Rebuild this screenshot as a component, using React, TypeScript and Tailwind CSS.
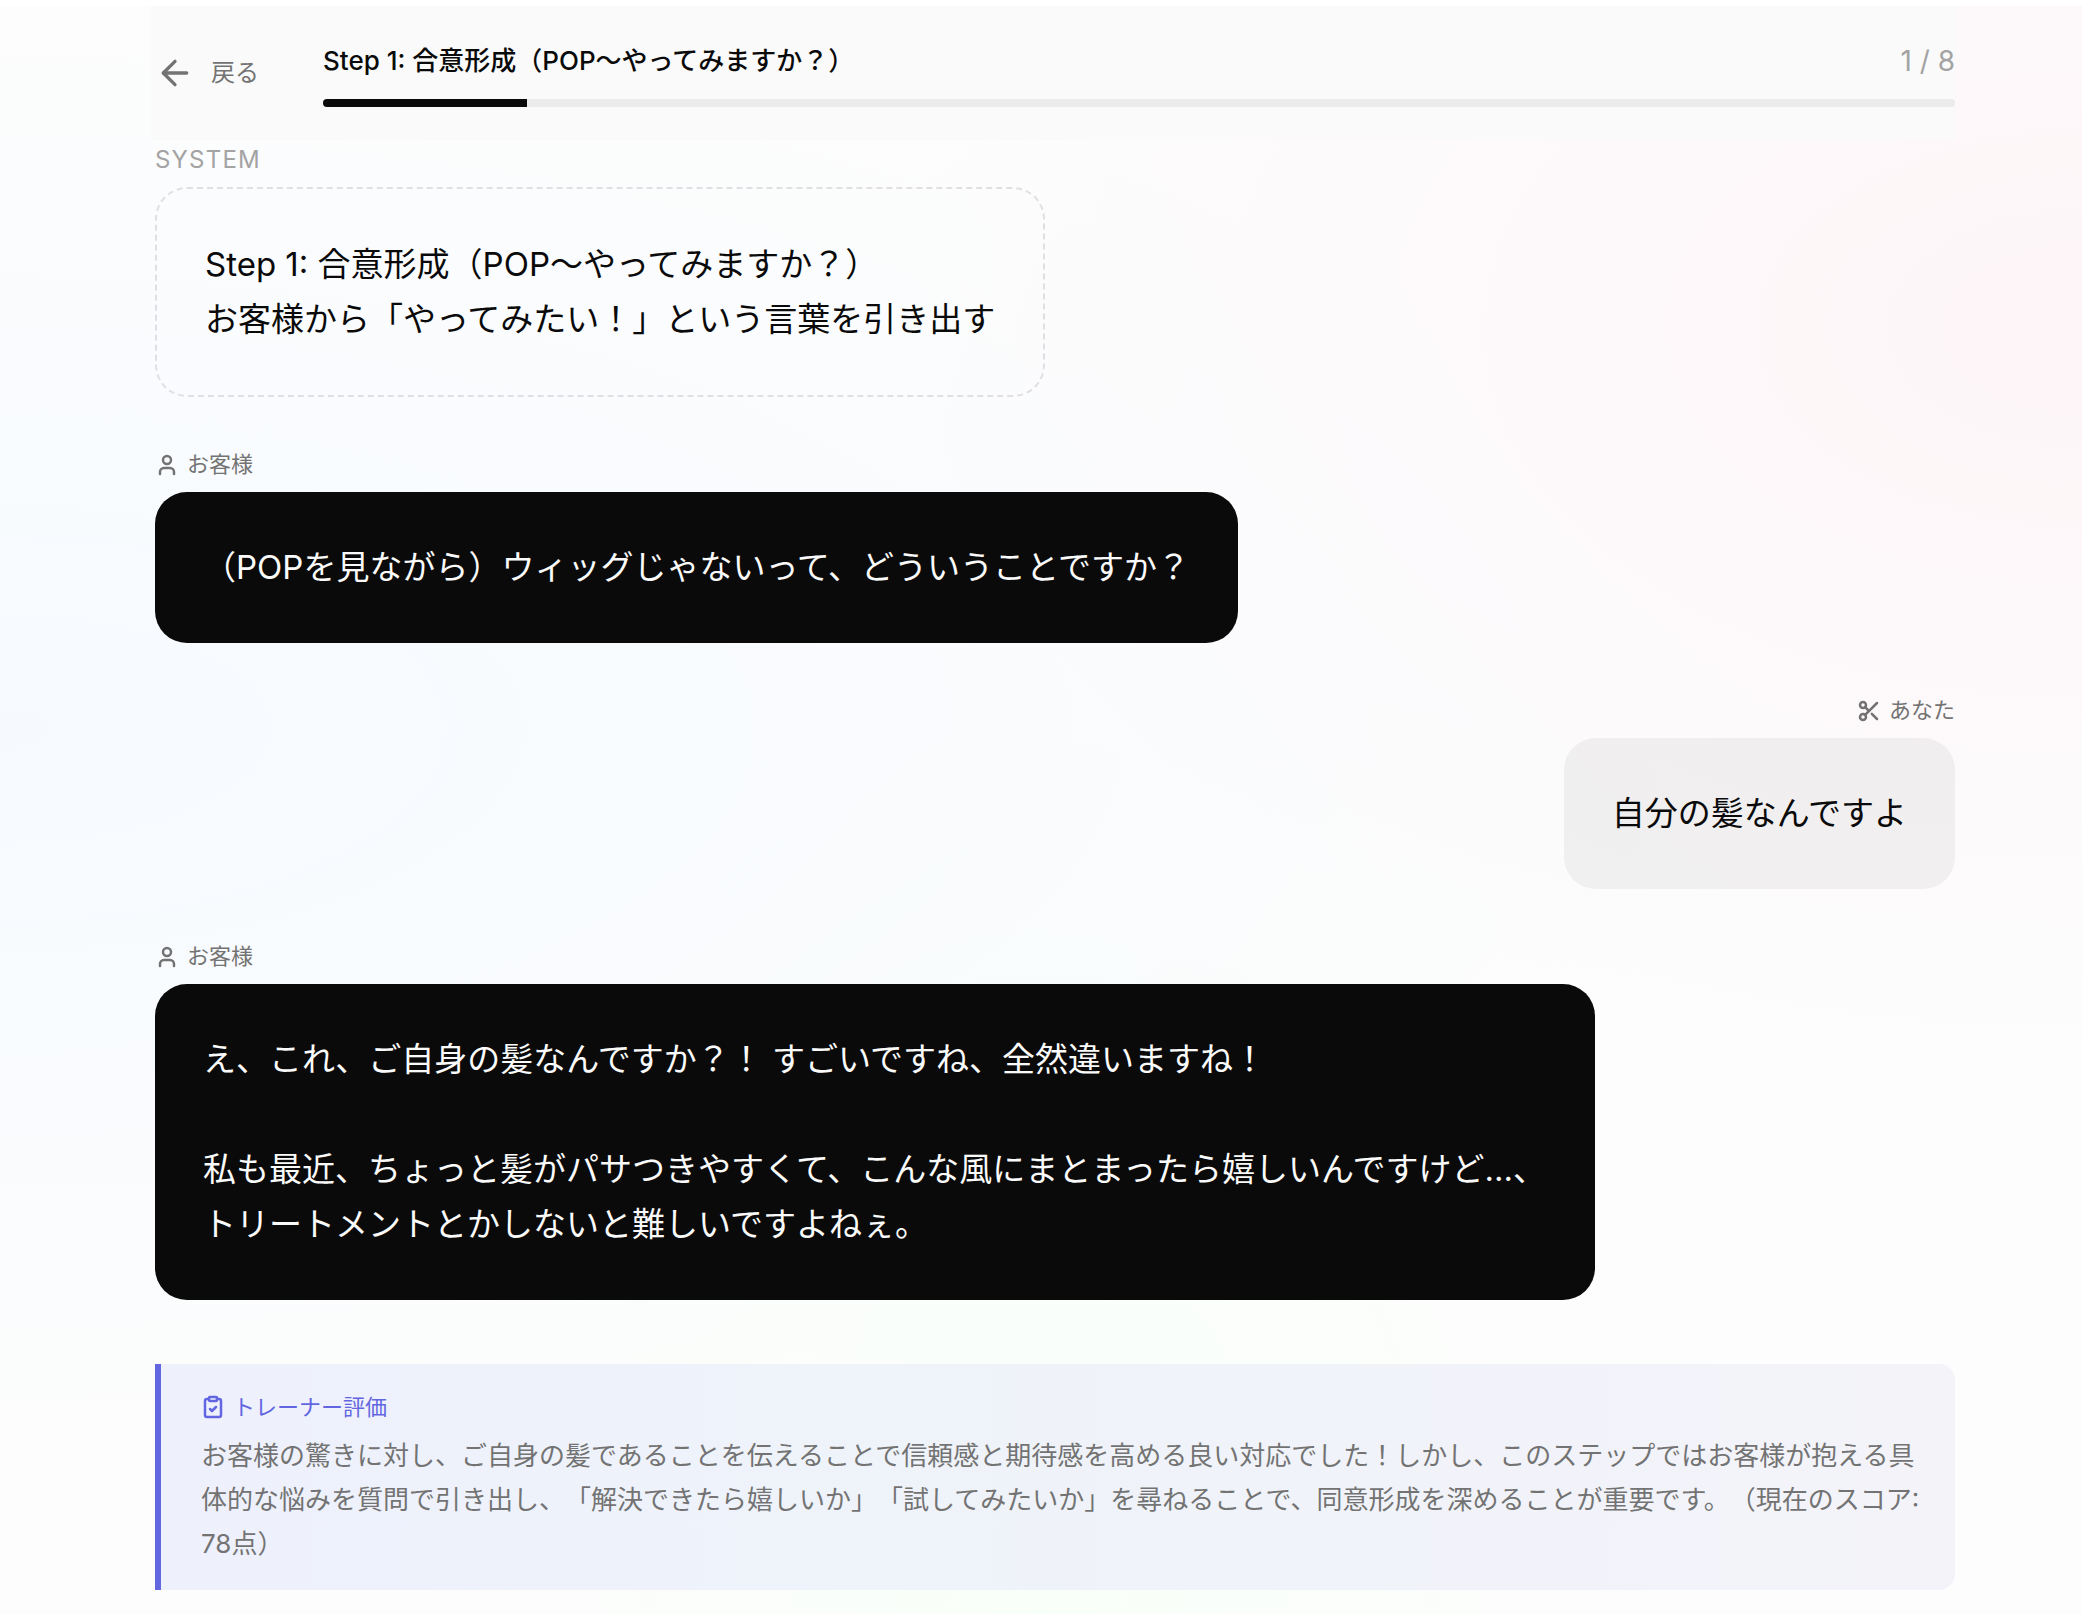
import { ArrowLeft, ClipboardCheck, Scissors, User } from 'lucide-react';
import React from 'react';

type Role = 'system' | 'customer' | 'user';

interface Message {
    role: Role;
    text: string;
}

const STEP_TITLE = 'Step 1: 合意形成（POP〜やってみますか？）';
const CURRENT_STEP = 1;
const TOTAL_STEPS = 8;

const MESSAGES: Message[] = [
    { role: 'system', text: `${STEP_TITLE}\nお客様から「やってみたい！」という言葉を引き出す` },
    { role: 'customer', text: '（POPを見ながら）ウィッグじゃないって、どういうことですか？' },
    { role: 'user', text: '自分の髪なんですよ' },
    {
        role: 'customer',
        text: 'え、これ、ご自身の髪なんですか？！ すごいですね、全然違いますね！\n\n私も最近、ちょっと髪がパサつきやすくて、こんな風にまとまったら嬉しいんですけど...、トリートメントとかしないと難しいですよねぇ。',
    },
];

const BUBBLE_STYLES: Record<Role, string> = {
    system: 'border-2 border-dashed border-[#e0e0e4] text-[#0a0a0a]',
    customer: 'bg-[#0a0a0a] text-[#fafafa]',
    user: 'bg-[#0a0a0a]/5 text-[#0a0a0a]',
};

function RoleLabel({ role }: { role: Role }) {
    if (role === 'system') {
        return <span className="text-[24px] leading-[39px] tracking-wider text-[#a3a3a3]">SYSTEM</span>;
    }
    const Icon = role === 'customer' ? User : Scissors;
    return (
        <span className="flex items-center gap-2 text-[22px] leading-[39px] text-[#737373]">
            <Icon className="size-6" strokeWidth={2.5} />
            {role === 'customer' ? 'お客様' : 'あなた'}
        </span>
    );
}

function ChatMessage({ role, text }: Message) {
    return (
        <div className={`flex flex-col gap-2 ${role === 'user' ? 'items-end' : 'items-start'}`}>
            <RoleLabel role={role} />
            <p className={`max-w-4/5 whitespace-pre-wrap rounded-[32px] p-12 text-[33px] leading-[55px] ${BUBBLE_STYLES[role]}`}>
                {text}
            </p>
        </div>
    );
}

function StepHeader() {
    return (
        <header className="-ml-1 flex h-[134px] items-center gap-16 bg-[#fafafa] pl-1">
            <button type="button" className="flex shrink-0 cursor-pointer items-center gap-4 text-[24px] text-[#737373]">
                <ArrowLeft className="size-10" />
                戻る
            </button>
            <div className="flex flex-1 flex-col gap-4">
                <div className="flex items-center justify-between leading-[44px]">
                    <h1 className="text-[26px] font-medium text-[#0a0a0a]">{STEP_TITLE}</h1>
                    <span className="text-[28px] text-[#a3a3a3]">
                        {CURRENT_STEP} / {TOTAL_STEPS}
                    </span>
                </div>
                <div className="h-2 overflow-hidden rounded-sm bg-[#ebebeb]">
                    <div className="h-full bg-[#0a0a0a]" style={{ width: `${(CURRENT_STEP / TOTAL_STEPS) * 100}%` }} />
                </div>
            </div>
        </header>
    );
}

function TrainerFeedback() {
    return (
        <section className="mt-16 rounded-r-2xl border-l-6 border-[#6366e1] bg-linear-to-r from-[#eef1fc] via-[#eff3f9] to-[#f4f3fa] py-6 pl-10 pr-6">
            <h2 className="mb-2 flex items-center gap-2 text-[22px] leading-[38px] text-[#6366e1]">
                <ClipboardCheck className="size-6" strokeWidth={2.5} />
                トレーナー評価
            </h2>
            <p className="text-[26px] leading-[44px] text-[#737373]">
                お客様の驚きに対し、ご自身の髪であることを伝えることで信頼感と期待感を高める良い対応でした！しかし、このステップではお客様が抱える具体的な悩みを質問で引き出し、「解決できたら嬉しいか」「試してみたいか」を尋ねることで、同意形成を深めることが重要です。（現在のスコア: 78点）
            </p>
        </section>
    );
}

export default function App() {
    return (
        <div className="min-h-screen border-t-6 border-white bg-[#fdfdfd] bg-[radial-gradient(ellipse_at_0%_45%,#f6faff_0%,transparent_60%),radial-gradient(ellipse_at_100%_20%,#fdf5f7_0%,transparent_40%),radial-gradient(ellipse_at_50%_100%,#f9fff9_0%,transparent_40%)] pl-7 font-['Inter','Noto_Sans_CJK_JP',sans-serif] [text-spacing-trim:space-all]">
            <div className="mx-auto max-w-[1800px] pb-6">
                <StepHeader />
                <main>
                    <div className="flex flex-col gap-12">
                        {MESSAGES.map((message, i) => (
                            <ChatMessage key={i} {...message} />
                        ))}
                    </div>
                    <TrainerFeedback />
                </main>
            </div>
        </div>
    );
}
